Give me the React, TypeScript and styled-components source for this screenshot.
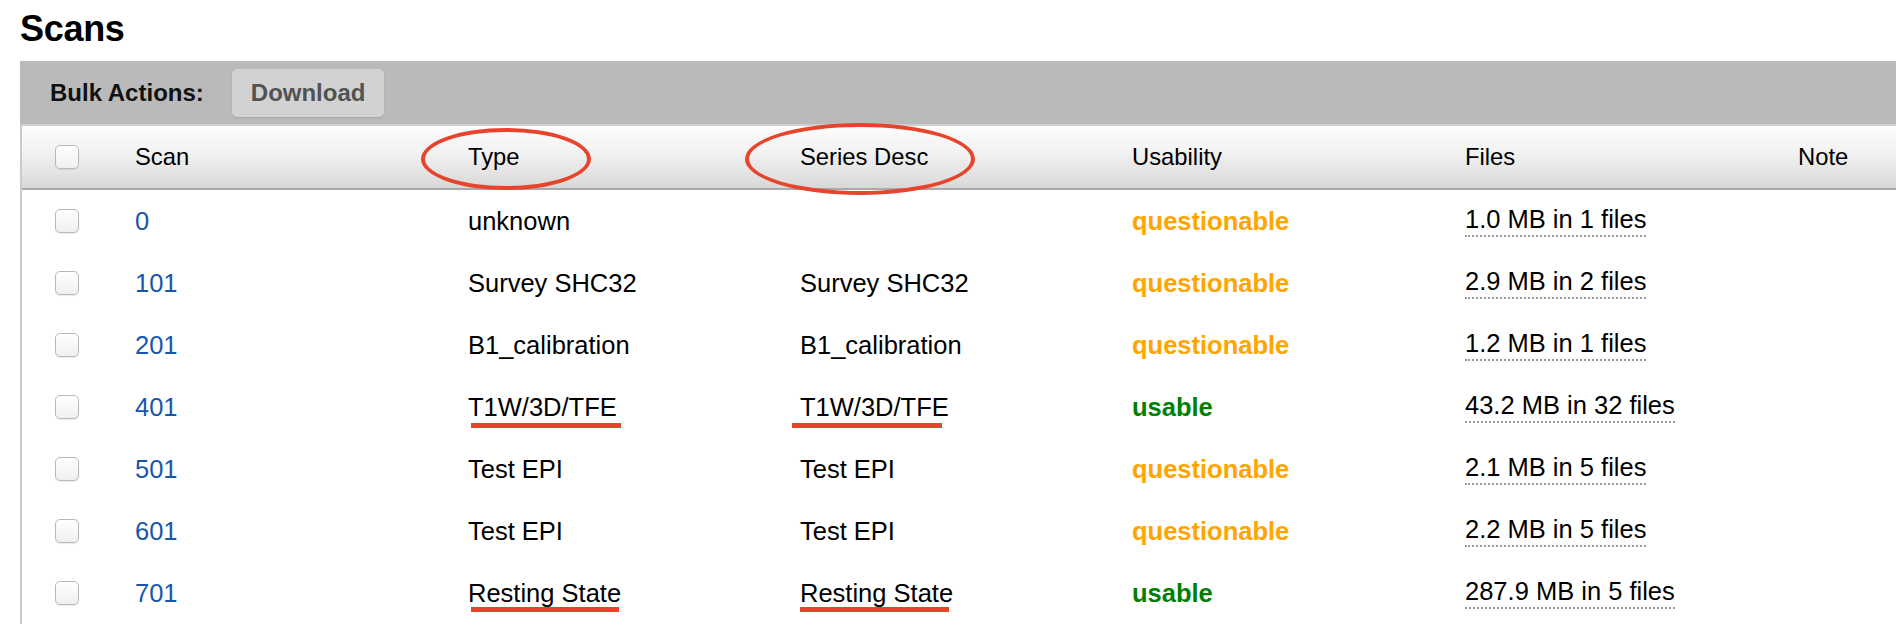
import React from "react";
import styled, { createGlobalStyle, css } from "styled-components";

const GlobalStyle = createGlobalStyle`
  html, body {
    margin: 0;
    padding: 0;
    background: #ffffff;
    overflow: hidden;
  }
  body {
    font-family: "Liberation Sans", Arial, Helvetica, sans-serif;
    color: #000;
  }
  * { box-sizing: border-box; }
`;

const COLS = "113px 333px 332px 332px 333px 333px 1fr";

const Page = styled.div`
  padding-left: 20px;
  width: 1896px;
`;

const Title = styled.h2`
  margin: 0 0 10px 0;
  padding-top: 7px;
  font-size: 36px;
  line-height: 44px;
  font-weight: 700;
  letter-spacing: -0.3px;
`;

const Panel = styled.section`
  display: flex;
  flex-direction: column;
`;

const BulkBar = styled.div`
  height: 63px;
  background: #bababa;
  display: flex;
  align-items: center;
  gap: 28px;
  padding-left: 30px;
`;

const BulkLabel = styled.span`
  font-size: 24px;
  font-weight: 700;
  color: #111;
`;

const BulkButton = styled.button`
  height: 48px;
  padding: 0 19px;
  border: none;
  border-radius: 5px;
  background: #d2d2d2;
  box-shadow: 0 1px 2px rgba(0, 0, 0, 0.12);
  font-family: inherit;
  font-size: 24px;
  font-weight: 700;
  color: #525252;
  margin-top: 1px;
`;

const Table = styled.div`
  border-left: 2px solid #cbcbcb;
  display: flex;
  flex-direction: column;
`;

const rowGrid = css`
  display: grid;
  grid-template-columns: ${COLS};
  align-items: center;
`;

const HeaderRow = styled.div`
  ${rowGrid};
  height: 66px;
  border-top: 2px solid #cfcfcf;
  border-bottom: 2px solid #a9a9a9;
  background: linear-gradient(#fcfcfc, #f3f3f3 40%, #d8d8d8);
`;

const Row = styled.div`
  ${rowGrid};
  height: 62px;
  background: #fff;
`;

const HeadCell = styled.div`
  font-size: 23.8px;
  color: #000;
  white-space: nowrap;
`;

const Cell = styled.div`
  font-size: 25.5px;
  color: #000;
  white-space: nowrap;
`;

const CheckCell = styled.div`
  padding-left: 33px;
  display: flex;
  align-items: center;
`;

const Check = styled.input.attrs({ type: "checkbox" })`
  appearance: none;
  -webkit-appearance: none;
  margin: 0;
  width: 24px;
  height: 24px;
  border: 1px solid #b9b9b9;
  border-radius: 5px;
  background: linear-gradient(#ffffff, #f0f0f0);
  box-shadow: 0 1px 1px rgba(0, 0, 0, 0.08);
`;

const ScanLink = styled.a`
  color: #1856ad;
  text-decoration: none;
  font-size: 25.5px;
`;

const Usability = styled.span<{ $ok: boolean }>`
  font-weight: 700;
  font-size: 25.5px;
  color: ${(p) => (p.$ok ? "#008000" : "#ffa500")};
`;

const FileSize = styled.span`
  display: inline-block;
  padding-bottom: 1px;
  border-bottom: 2px dotted #9a9a9a;
`;

const Circled = styled.span<{ $l: number; $r: number; $t: number; $b: number }>`
  position: relative;
  display: inline-block;
  &::after {
    content: "";
    position: absolute;
    left: ${(p) => -p.$l}px;
    right: ${(p) => -p.$r}px;
    top: ${(p) => -p.$t}px;
    bottom: ${(p) => -p.$b}px;
    border: 4px solid #e8432b;
    border-radius: 50%;
    pointer-events: none;
  }
`;

const Marked = styled.span<{ $l: number; $r: number; $b: number }>`
  position: relative;
  display: inline-block;
  &::after {
    content: "";
    position: absolute;
    left: ${(p) => p.$l}px;
    right: ${(p) => p.$r}px;
    bottom: ${(p) => p.$b}px;
    height: 4.5px;
    background: #e8432b;
  }
`;

type Scan = {
  id: string;
  type: string;
  desc: string;
  ok: boolean;
  files: string;
  mark?: { tl: number; tr: number; sl: number; sr: number; b: number };
};

const scans: Scan[] = [
  { id: "0", type: "unknown", desc: "", ok: false, files: "1.0 MB in 1 files" },
  { id: "101", type: "Survey SHC32", desc: "Survey SHC32", ok: false, files: "2.9 MB in 2 files" },
  { id: "201", type: "B1_calibration", desc: "B1_calibration", ok: false, files: "1.2 MB in 1 files" },
  {
    id: "401",
    type: "T1W/3D/TFE",
    desc: "T1W/3D/TFE",
    ok: true,
    files: "43.2 MB in 32 files",
    mark: { tl: 3, tr: -4, sl: -8, sr: 7, b: -6 },
  },
  { id: "501", type: "Test EPI", desc: "Test EPI", ok: false, files: "2.1 MB in 5 files" },
  { id: "601", type: "Test EPI", desc: "Test EPI", ok: false, files: "2.2 MB in 5 files" },
  {
    id: "701",
    type: "Resting State",
    desc: "Resting State",
    ok: true,
    files: "287.9 MB in 5 files",
    mark: { tl: 3, tr: 2, sl: 0, sr: 4, b: -4 },
  },
];

export default function App() {
  return (
    <>
      <GlobalStyle />
      <Page>
        <Title>Scans</Title>
        <Panel>
          <BulkBar>
            <BulkLabel>Bulk Actions:</BulkLabel>
            <BulkButton>Download</BulkButton>
          </BulkBar>
          <Table>
            <HeaderRow>
              <CheckCell>
                <Check />
              </CheckCell>
              <HeadCell>Scan</HeadCell>
              <HeadCell>
                <Circled $l={47} $r={71} $t={15} $b={19}>
                  Type
                </Circled>
              </HeadCell>
              <HeadCell>
                <Circled $l={55} $r={47} $t={20} $b={24}>
                  Series Desc
                </Circled>
              </HeadCell>
              <HeadCell>Usability</HeadCell>
              <HeadCell>Files</HeadCell>
              <HeadCell>Note</HeadCell>
            </HeaderRow>
            {scans.map((s) => (
              <Row key={s.id}>
                <CheckCell>
                  <Check />
                </CheckCell>
                <Cell>
                  <ScanLink href="#">{s.id}</ScanLink>
                </Cell>
                <Cell>
                  {s.mark ? (
                    <Marked $l={s.mark.tl} $r={s.mark.tr} $b={s.mark.b}>
                      {s.type}
                    </Marked>
                  ) : (
                    s.type
                  )}
                </Cell>
                <Cell>
                  {s.mark ? (
                    <Marked $l={s.mark.sl} $r={s.mark.sr} $b={s.mark.b}>
                      {s.desc}
                    </Marked>
                  ) : (
                    s.desc
                  )}
                </Cell>
                <Cell>
                  <Usability $ok={s.ok}>{s.ok ? "usable" : "questionable"}</Usability>
                </Cell>
                <Cell>
                  <FileSize>{s.files}</FileSize>
                </Cell>
                <Cell />
              </Row>
            ))}
          </Table>
        </Panel>
      </Page>
    </>
  );
}
